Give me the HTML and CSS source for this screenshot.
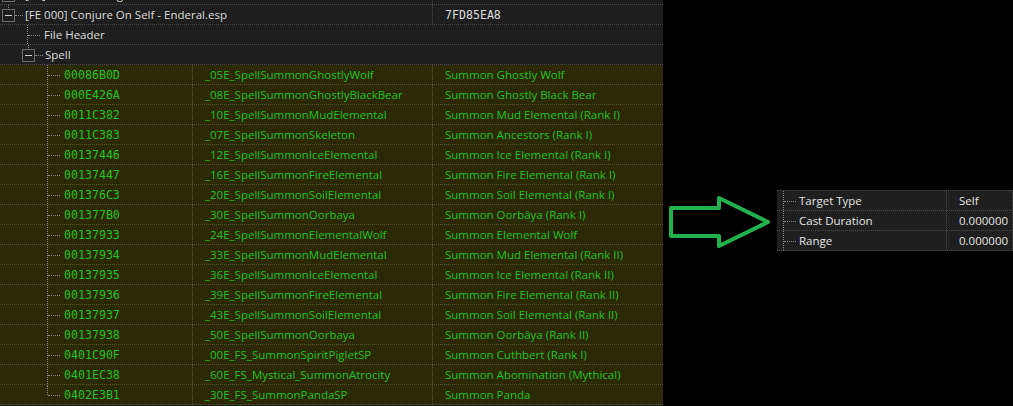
FILE: index.html
```html
<!DOCTYPE html>
<html lang="en">
<head>
    <meta charset="UTF-8">
    <title>Conjure On Self - Enderal.esp</title>
    <link rel="stylesheet" href="styles.css">
</head>
<body>
    <div class="screen">
        <!-- record tree -->
        <div class="tree">
            <div class="rows">
                <div class="row">
                    <div class="cell name"><span class="toggle stem"></span><span class="dots"></span><span class="label">[00] Enderal - Forgotten Stories.esm</span></div>
                    <div class="cell"></div>
                    <div class="cell split"></div>
                </div>
                <div class="row">
                    <div class="cell name"><span class="toggle stem"></span><span class="dots"></span><span class="label">[FE 000] Conjure On Self - Enderal.esp</span></div>
                    <div class="cell"></div>
                    <div class="cell split mono">7FD85EA8</div>
                </div>
                <div class="row">
                    <div class="cell name lvl1"><span class="guide"></span><span class="label">File Header</span></div>
                    <div class="cell"></div>
                    <div class="cell"></div>
                </div>
                <div class="row">
                    <div class="cell name lvl1b"><span class="toggle stem"></span><span class="dots"></span><span class="label">Spell</span></div>
                    <div class="cell"></div>
                    <div class="cell"></div>
                </div>
            </div>
            <div class="rows spells" id="spells"></div>
        </div>

        <div class="side">
            <svg class="arrow" width="104" height="54" viewBox="0 0 104 54">
                <path d="M3 13 H51 V3 L100 27 L51 51 V41 H3 Z" fill="none" stroke="#22b14c" stroke-width="4" stroke-linejoin="round"/>
            </svg>
            <div class="props">
                <div class="prow"><div class="pname"><span class="guide"></span>Target Type</div><div class="pval">Self</div></div>
                <div class="prow"><div class="pname"><span class="guide"></span>Cast Duration</div><div class="pval">0.000000</div></div>
                <div class="prow"><div class="pname"><span class="guide"></span>Range</div><div class="pval">0.000000</div></div>
            </div>
        </div>
    </div>

    <script>
        // FormID, EditorID, Name
        const spells = [
            ['00086B0D', '_05E_SpellSummonGhostlyWolf', 'Summon Ghostly Wolf'],
            ['000E426A', '_08E_SpellSummonGhostlyBlackBear', 'Summon Ghostly Black Bear'],
            ['0011C382', '_10E_SpellSummonMudElemental', 'Summon Mud Elemental (Rank I)'],
            ['0011C383', '_07E_SpellSummonSkeleton', 'Summon Ancestors (Rank I)'],
            ['00137446', '_12E_SpellSummonIceElemental', 'Summon Ice Elemental (Rank I)'],
            ['00137447', '_16E_SpellSummonFireElemental', 'Summon Fire Elemental (Rank I)'],
            ['001376C3', '_20E_SpellSummonSoilElemental', 'Summon Soil Elemental (Rank I)'],
            ['001377B0', '_30E_SpellSummonOorbaya', 'Summon Oorbâya (Rank I)'],
            ['00137933', '_24E_SpellSummonElementalWolf', 'Summon Elemental Wolf'],
            ['00137934', '_33E_SpellSummonMudElemental', 'Summon Mud Elemental (Rank II)'],
            ['00137935', '_36E_SpellSummonIceElemental', 'Summon Ice Elemental (Rank II)'],
            ['00137936', '_39E_SpellSummonFireElemental', 'Summon Fire Elemental (Rank II)'],
            ['00137937', '_43E_SpellSummonSoilElemental', 'Summon Soil Elemental (Rank II)'],
            ['00137938', '_50E_SpellSummonOorbaya', 'Summon Oorbâya (Rank II)'],
            ['0401C90F', '_00E_FS_SummonSpiritPigletSP', 'Summon Cuthbert (Rank I)'],
            ['0401EC38', '_60E_FS_Mystical_SummonAtrocity', 'Summon Abomination (Mythical)'],
            ['0402E3B1', '_30E_FS_SummonPandaSP', 'Summon Panda']
        ];

        const list = document.getElementById('spells');
        spells.forEach(function (s, i) {
            const row = document.createElement('div');
            row.className = 'row';
            const last = i === spells.length - 1 ? ' last' : '';
            row.innerHTML =
                '<div class="cell name lvl2"><span class="guide' + last + '"></span><span class="label mono">' + s[0] + '</span></div>' +
                '<div class="cell split">' + s[1] + '</div>' +
                '<div class="cell split">' + s[2] + '</div>';
            list.appendChild(row);
        });
    </script>
</body>
</html>
```

FILE: styles.css
```css
body {
    margin: 0;
    background-color: #000;
    font-family: "Open Sans", "Noto Sans", sans-serif;
    font-size: 11.5px;
    color: #dcdcdc;
}
.screen {
    display: flex;
    height: 406px;
    overflow: hidden;
}
.tree {
    width: 663px;
    flex: none;
    background-color: #1e1e1e;
    overflow: hidden;
}
.rows:first-child {
    margin-top: -15px;
}
.row {
    display: grid;
    grid-template-columns: 192px 240px 1fr;
    height: 20px;
    box-sizing: border-box;
    border-bottom: 1px dotted #4a4a4a;
}
.cell {
    display: flex;
    align-items: center;
    white-space: nowrap;
    overflow: hidden;
    padding-left: 12px;
}
.cell.split {
    border-left: 1px dotted #4a4a4a;
}
.cell.name {
    padding-left: 2px;
    align-items: stretch;
    overflow: visible;
}
.cell.name .label {
    display: flex;
    align-items: center;
    margin-left: 2px;
}
.lvl1 {
    padding-left: 27px !important;
}
.lvl1b {
    padding-left: 22px !important;
}
.lvl2 {
    padding-left: 47px !important;
}
.mono {
    font-family: "DejaVu Sans Mono", "Liberation Mono", monospace;
    font-size: 11.6px;
}

/* tree guides */
.guide {
    position: relative;
    width: 15px;
    flex: none;
}
.guide::before {
    content: '';
    position: absolute;
    left: 0;
    top: 0;
    bottom: 0;
    border-left: 1px dotted #8a8a8a;
}
.guide.last::before {
    bottom: 50%;
}
.guide::after {
    content: '';
    position: absolute;
    left: 1px;
    top: 50%;
    width: 12px;
    border-top: 1px dotted #8a8a8a;
}
.toggle {
    position: relative;
    width: 13px;
    height: 13px;
    flex: none;
    align-self: center;
    box-sizing: border-box;
    border: 1px solid #6a6a6a;
    margin-top: 1px;
}
.toggle::after {
    content: '';
    position: absolute;
    left: 2px;
    right: 2px;
    top: 5px;
    border-top: 1px solid #cfcfcf;
}
.toggle.stem::before {
    content: '';
    position: absolute;
    left: 5px;
    bottom: 100%;
    height: 5px;
    border-left: 1px dotted #8a8a8a;
}
.dots {
    width: 8px;
    flex: none;
    align-self: center;
    margin-top: 1px;
    border-top: 1px dotted #8a8a8a;
}

/* green spell rows */
.spells {
    background-color: #2b2906;
    color: #27c227;
}
.spells .row {
    border-bottom-color: #56532e;
}
.spells .cell.split {
    border-left-color: #5e5b38;
}

/* right side */
.side {
    display: flex;
    align-items: flex-start;
}
.arrow {
    margin-left: 5px;
    margin-top: 195px;
}
.props {
    margin-left: 5px;
    margin-top: 190px;
    width: 236px;
    box-sizing: border-box;
    background-color: #1f1f1f;
    border-top: 1px dotted #4a4a4a;
    border-right: 1px dotted #4a4a4a;
    color: #e4e4e4;
}
.prow {
    display: grid;
    grid-template-columns: 169px 1fr;
    height: 20px;
    box-sizing: border-box;
    border-bottom: 1px dotted #4a4a4a;
}
.pname {
    display: flex;
    align-items: stretch;
    padding-left: 6px;
    line-height: 19px;
}
.pname .guide {
    width: 16px;
}
.pval {
    border-left: 1px dotted #4a4a4a;
    padding-left: 12px;
    line-height: 19px;
}
```
